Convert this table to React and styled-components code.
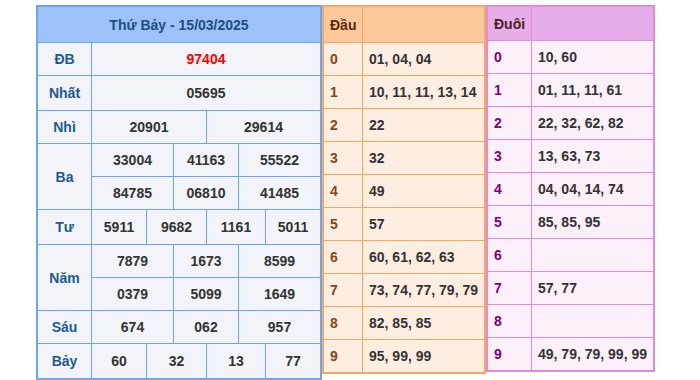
import styled, { createGlobalStyle } from "styled-components";

const GlobalStyle = createGlobalStyle`
    body {
        margin: 0;
        background: #ffffff;
        font-family: "Liberation Sans", Arial, sans-serif;
    }
`;

const Page = styled.div`
    display: flex;
    align-items: flex-start;
    padding: 5px 0 0 36px;
`;

const ResultTable = styled.div`
    display: grid;
    grid-template-columns: 53px 54px 26px 32px 31px 26px 54px;
    grid-template-rows: 35px 32px 34px 32px 32px 32px 34px 32px 32px 32px 34px;
    gap: 1px;
    background: #6ea4f4;
    border: 2px solid #6ea4f4;
`;

const Header = styled.div`
    grid-column: 1 / -1;
    display: flex;
    align-items: center;
    justify-content: center;
    background: #9cc2f9;
    color: #1e4e84;
    font-size: 14px;
    font-weight: bold;
`;

const Label = styled.div`
    grid-row: span ${(p) => p.$rows || 1};
    display: flex;
    align-items: center;
    justify-content: center;
    background: #f2f4f9;
    color: #1a5a96;
    font-size: 14px;
    font-weight: bold;
`;

const Num = styled.div`
    grid-column: span ${(p) => p.$span || 1};
    display: flex;
    align-items: center;
    justify-content: center;
    background: #f2f4f9;
    color: ${(p) => (p.$special ? "#ff0000" : "#333333")};
    font-size: 14px;
    font-weight: bold;
`;

const LotoTable = styled.div`
    display: grid;
    grid-template-columns: ${(p) => p.$first}px 121px;
    grid-template-rows: ${(p) => p.$head}px repeat(10, 32px);
    gap: 1px;
    background: ${(p) => p.$line};
    border: 2px solid ${(p) => p.$line};
`;

const LotoHead = styled.div`
    display: flex;
    align-items: center;
    padding-left: 6px;
    background: ${(p) => p.$bg};
    color: ${(p) => p.$color};
    font-size: 14px;
    font-weight: bold;
`;

const LotoKey = styled.div`
    display: flex;
    align-items: center;
    padding-left: 6px;
    background: ${(p) => p.$bg};
    color: ${(p) => p.$color};
    font-size: 14px;
    font-weight: bold;
`;

const LotoValue = styled.div`
    display: flex;
    align-items: center;
    padding-left: 6px;
    background: ${(p) => p.$bg};
    color: #333333;
    font-size: 14px;
    font-weight: bold;
    white-space: nowrap;
`;

const prizes = [
    { name: "ĐB", rows: [[[6, "97404"]]], special: true },
    { name: "Nhất", rows: [[[6, "05695"]]] },
    { name: "Nhì", rows: [[[3, "20901"], [3, "29614"]]] },
    {
        name: "Ba",
        rows: [
            [[2, "33004"], [2, "41163"], [2, "55522"]],
            [[2, "84785"], [2, "06810"], [2, "41485"]],
        ],
    },
    { name: "Tư", rows: [[[1, "5911"], [2, "9682"], [2, "1161"], [1, "5011"]]] },
    {
        name: "Năm",
        rows: [
            [[2, "7879"], [2, "1673"], [2, "8599"]],
            [[2, "0379"], [2, "5099"], [2, "1649"]],
        ],
    },
    { name: "Sáu", rows: [[[2, "674"], [2, "062"], [2, "957"]]] },
    { name: "Bảy", rows: [[[1, "60"], [2, "32"], [2, "13"], [1, "77"]]] },
];

const heads = [
    "01, 04, 04",
    "10, 11, 11, 13, 14",
    "22",
    "32",
    "49",
    "57",
    "60, 61, 62, 63",
    "73, 74, 77, 79, 79",
    "82, 85, 85",
    "95, 99, 99",
];

const tails = [
    "10, 60",
    "01, 11, 11, 61",
    "22, 32, 62, 82",
    "13, 63, 73",
    "04, 04, 14, 74",
    "85, 85, 95",
    "",
    "57, 77",
    "",
    "49, 79, 79, 99, 99",
];

const Loto = ({ title, items, theme, first, head }) => (
    <LotoTable $line={theme.line} $first={first} $head={head}>
        <LotoHead $bg={theme.head} $color={theme.headText}>
            {title}
        </LotoHead>
        <LotoHead $bg={theme.head} />
        {items.map((value, i) => [
            <LotoKey key={`k${i}`} $bg={theme.body} $color={theme.key}>
                {i}
            </LotoKey>,
            <LotoValue key={`v${i}`} $bg={theme.body}>
                {value}
            </LotoValue>,
        ])}
    </LotoTable>
);

const orange = {
    line: "#f5a95f",
    head: "#fbc99c",
    headText: "#5c2a0a",
    body: "#fdeee1",
    key: "#8b4513",
};

const purple = {
    line: "#e38ae0",
    head: "#e5aee8",
    headText: "#4a2222",
    body: "#fcf0fa",
    key: "#800080",
};

const App = () => {
    return (
        <>
            <GlobalStyle />
            <Page>
                <ResultTable>
                    <Header>Thứ Bảy - 15/03/2025</Header>
                    {prizes.map((prize) => [
                        <Label key={prize.name} $rows={prize.rows.length}>
                            {prize.name}
                        </Label>,
                        ...prize.rows.flatMap((row, r) =>
                            row.map(([span, value], c) => (
                                <Num
                                    key={`${prize.name}-${r}-${c}`}
                                    $span={span}
                                    $special={prize.special}
                                >
                                    {value}
                                </Num>
                            ))
                        ),
                    ])}
                </ResultTable>
                <Loto title="Đầu" items={heads} theme={orange} first={38} head={35} />
                <Loto title="Đuôi" items={tails} theme={purple} first={43} head={33} />
            </Page>
        </>
    );
};

export default App;
